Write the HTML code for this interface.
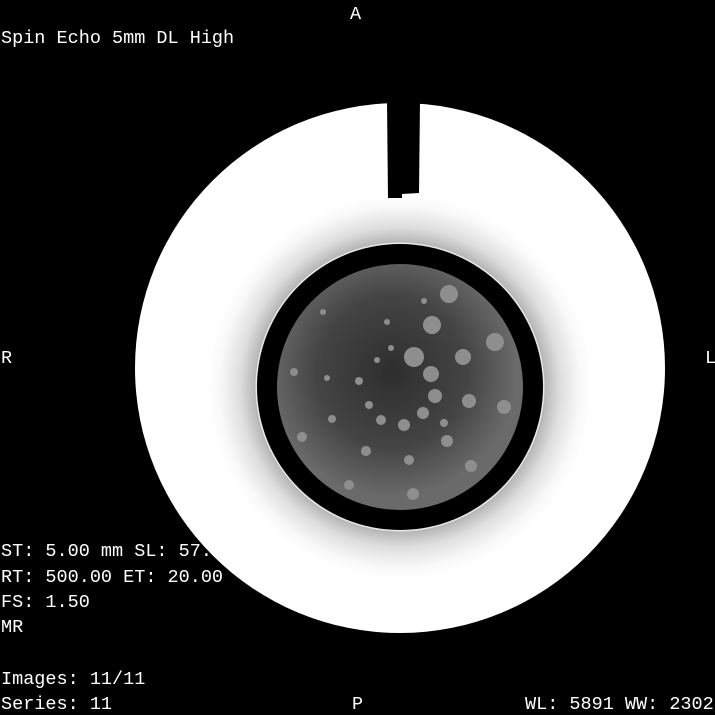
<!DOCTYPE html>
<html><head><style>
html,body{margin:0;padding:0;background:#000;width:715px;height:715px;overflow:hidden}
.t{position:absolute;color:#fff;font-family:"Liberation Mono",monospace;font-size:18.5px;line-height:20px;white-space:pre}
</style></head><body>
<svg width="715" height="715" style="position:absolute;left:0;top:0">
<defs>
<radialGradient id="halo" gradientUnits="userSpaceOnUse" cx="400" cy="387" r="200">
<stop offset="0.72" stop-color="#b4b4b4"/>
<stop offset="0.8" stop-color="#dedede"/>
<stop offset="0.9" stop-color="#f8f8f8"/>
<stop offset="0.96" stop-color="#fff"/>
</radialGradient>
<radialGradient id="disk" gradientUnits="userSpaceOnUse" cx="392" cy="372" r="125">
<stop offset="0" stop-color="#2e2e2e"/>
<stop offset="0.6" stop-color="#444"/>
<stop offset="1" stop-color="#6a6a6a"/>
</radialGradient>
</defs>
<rect width="715" height="715" fill="#000"/>
<circle cx="400" cy="368" r="265" fill="#fff"/>
<circle cx="400" cy="387" r="200" fill="url(#halo)"/>
<path d="M387 101 L420 101 L419 193 L402 194 L402 198 L388 198 Z" fill="#000"/>
<circle cx="400" cy="387" r="144.5" fill="#e8e8e8"/>
<circle cx="400" cy="387" r="143" fill="#000"/>
<circle cx="400" cy="387" r="123" fill="url(#disk)"/>
<g fill="#8e8e8e">
<circle cx="449" cy="294" r="9"/><circle cx="432" cy="325" r="9"/><circle cx="495" cy="342" r="9"/>
<circle cx="414" cy="357" r="10"/><circle cx="463" cy="357" r="8"/><circle cx="431" cy="374" r="8"/>
<circle cx="435" cy="396" r="7"/><circle cx="469" cy="401" r="7"/><circle cx="504" cy="407" r="7"/>
<circle cx="423" cy="413" r="6"/><circle cx="404" cy="425" r="6"/><circle cx="447" cy="441" r="6"/>
<circle cx="471" cy="466" r="6"/><circle cx="413" cy="494" r="6"/><circle cx="349" cy="485" r="5"/>
<circle cx="302" cy="437" r="5"/><circle cx="366" cy="451" r="5"/><circle cx="409" cy="460" r="5"/>
<circle cx="381" cy="420" r="5"/><circle cx="359" cy="381" r="4"/><circle cx="294" cy="372" r="4"/>
<circle cx="327" cy="378" r="3"/><circle cx="332" cy="419" r="4"/><circle cx="369" cy="405" r="4"/>
<circle cx="377" cy="360" r="3"/><circle cx="391" cy="348" r="3"/><circle cx="323" cy="312" r="3"/>
<circle cx="387" cy="322" r="3"/><circle cx="424" cy="301" r="3"/><circle cx="444" cy="423" r="4"/>
</g>
</svg>
<div class="t" style="left:350px;top:5px">A</div>
<div class="t" style="left:1px;top:29px">Spin Echo 5mm DL High</div>
<div class="t" style="left:1px;top:349px">R</div>
<div class="t" style="left:705px;top:349px">L</div>
<div class="t" style="left:1px;top:542px">ST: 5.00 mm SL: 57.</div>
<div class="t" style="left:1px;top:568px">RT: 500.00 ET: 20.00</div>
<div class="t" style="left:1px;top:593px">FS: 1.50</div>
<div class="t" style="left:1px;top:618px">MR</div>
<div class="t" style="left:1px;top:670px">Images: 11/11</div>
<div class="t" style="left:1px;top:695px">Series: 11</div>
<div class="t" style="left:352px;top:695px">P</div>
<div class="t" style="left:525px;top:695px">WL: 5891 WW: 2302</div>
</body></html>
